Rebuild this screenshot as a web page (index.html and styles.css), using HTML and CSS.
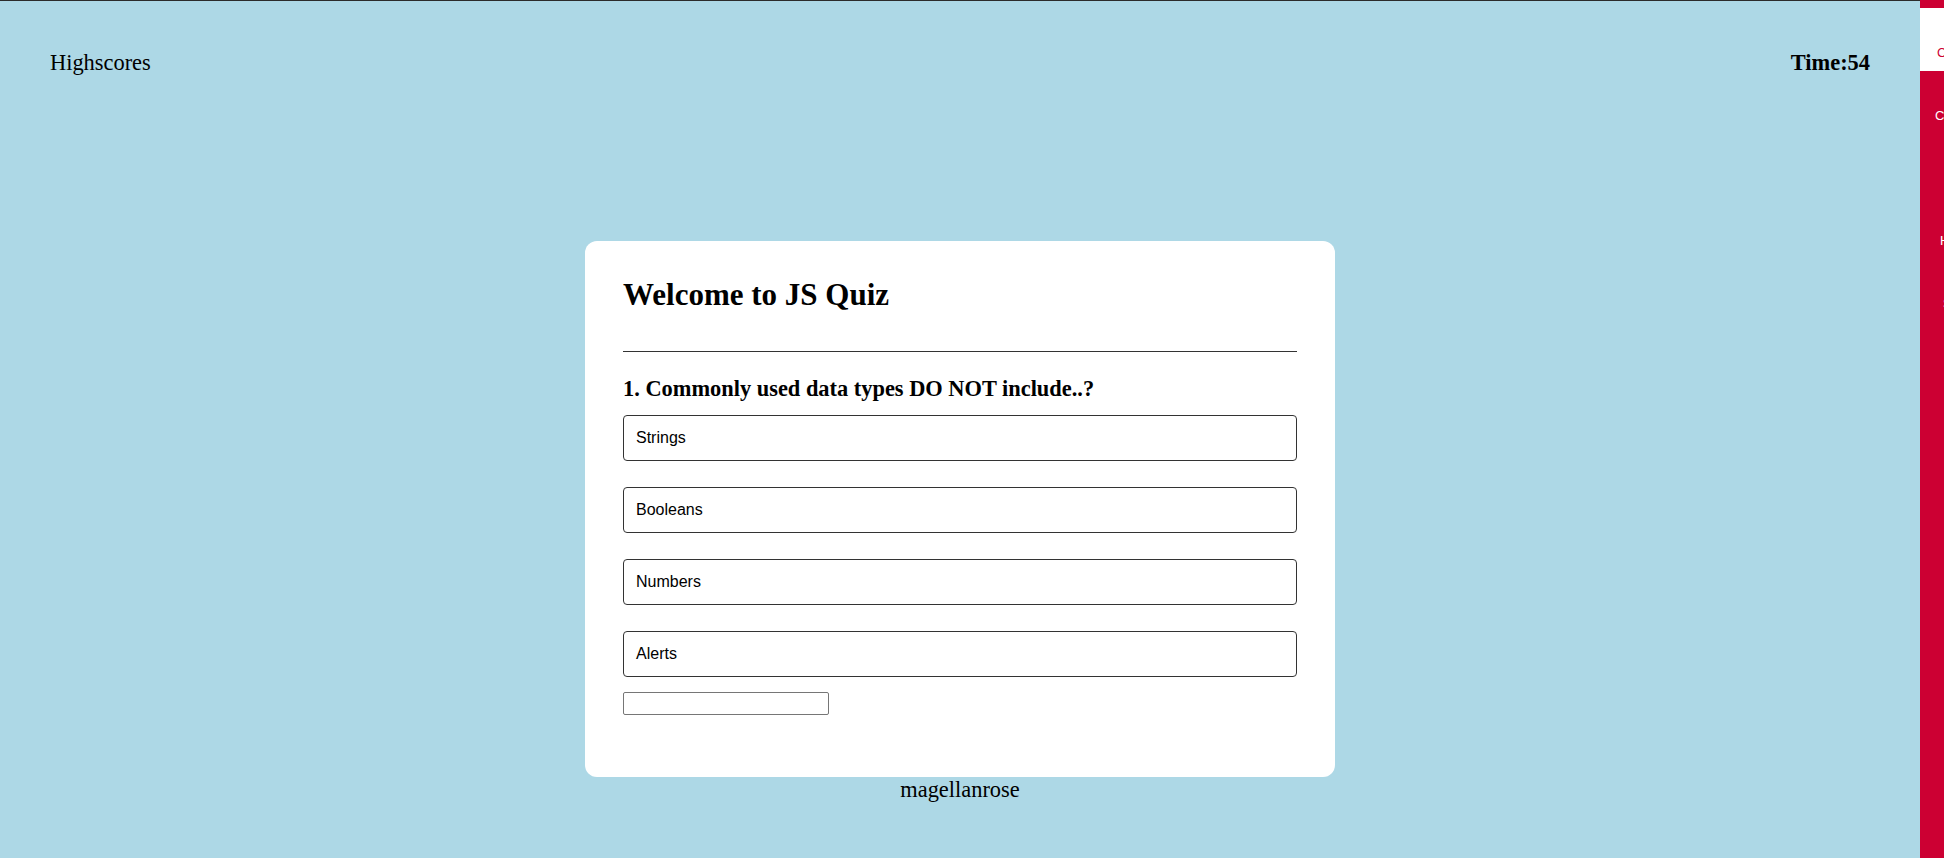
FILE: index.html
```html
<!DOCTYPE html>
<html lang="en">
<head>
<meta charset="utf-8">
<title>JS Quiz</title>
<link rel="stylesheet" href="styles.css">
</head>
<body>
  <div class="page">
    <main class="main">
      <header class="topbar">
        <a class="highscores">Highscores</a>
        <div class="timer">Time:54</div>
      </header>
      <section class="card">
        <h1 class="title">Welcome to JS Quiz</h1>
        <hr class="rule">
        <h3 class="question">1. Commonly used data types DO NOT include..?</h3>
        <div class="answers">
          <button class="answer">Strings</button>
          <button class="answer">Booleans</button>
          <button class="answer">Numbers</button>
          <button class="answer">Alerts</button>
        </div>
        <input class="initials" type="text">
      </section>
      <footer class="credit">magellanrose</footer>
    </main>
    <aside class="sidebar">
      <div class="side-top"></div>
      <div class="side-active"><span class="side-letter red">C</span></div>
      <div class="side-item one"><span class="side-letter">C</span></div>
      <div class="side-item two"><span class="side-letter">H</span></div>
      <div class="side-item three"><span class="side-letter">S</span></div>
    </aside>
  </div>
</body>
</html>
```

FILE: styles.css
```css
html, body {
  margin: 0;
  padding: 0;
}

body {
  background: #add8e6;
  font-family: "Liberation Serif", "Times New Roman", serif;
  color: #000;
  overflow: hidden;
}

.page {
  display: flex;
  height: 858px;
}

.main {
  flex: 1;
  display: flex;
  flex-direction: column;
  align-items: center;
  border-top: 1px solid #2b2b2b;
  min-width: 0;
}

.topbar {
  align-self: stretch;
  display: flex;
  justify-content: space-between;
  padding: 49px 50px 0 50px;
  font-size: 22.4px;
  line-height: 26px;
}

.highscores {
  color: #000;
}

.timer {
  font-weight: bold;
}

.card {
  margin-top: 165px;
  width: 674px;
  padding: 36px 38px 62px 38px;
  background: #fff;
  border-radius: 12px;
}

.title {
  margin: 0;
  font-size: 31px;
  font-weight: bold;
  line-height: normal;
}

.rule {
  margin: 38px 0 24px 0;
  border: none;
  border-top: 1px solid #333;
  height: 0;
}

.question {
  margin: 0 0 13px 0;
  font-size: 22.4px;
  font-weight: bold;
  line-height: normal;
}

.answers {
  display: flex;
  flex-direction: column;
  gap: 26px;
}

.answer {
  display: block;
  width: 100%;
  height: 46px;
  margin: 0;
  padding: 0 12px;
  text-align: left;
  background: #fff;
  border: 1px solid #333;
  border-radius: 4px;
  font-family: "Liberation Sans", Arial, sans-serif;
  font-size: 16px;
  color: #000;
}

.initials {
  display: block;
  margin: 15px 0 0 0;
  width: 206px;
  height: 23px;
  box-sizing: border-box;
  padding: 1px 2px;
  border: 1px solid #767676;
  border-radius: 2px;
  background: #fff;
}

.credit {
  font-size: 22.4px;
  line-height: 26px;
  margin-top: 0;
}

.sidebar {
  width: 24px;
  flex: none;
  background: #cc0033;
  overflow: hidden;
  font-family: "Liberation Sans", Arial, sans-serif;
  font-size: 13px;
  color: #fff;
  display: flex;
  flex-direction: column;
}

.side-top {
  height: 8px;
}

.side-active {
  height: 63px;
  background: #fff;
  display: flex;
  align-items: flex-end;
  padding-left: 17px;
  padding-bottom: 11px;
  box-sizing: border-box;
}

.side-item {
  padding-left: 15px;
  line-height: 14px;
}

.side-item.one {
  margin-top: 38px;
}

.side-item.two {
  margin-top: 111px;
  padding-left: 20px;
}

.side-item.three {
  margin-top: 49px;
  padding-left: 23px;
}

.side-letter {
  white-space: nowrap;
}

.side-letter.red {
  color: #cc0033;
  line-height: 14px;
}
```
